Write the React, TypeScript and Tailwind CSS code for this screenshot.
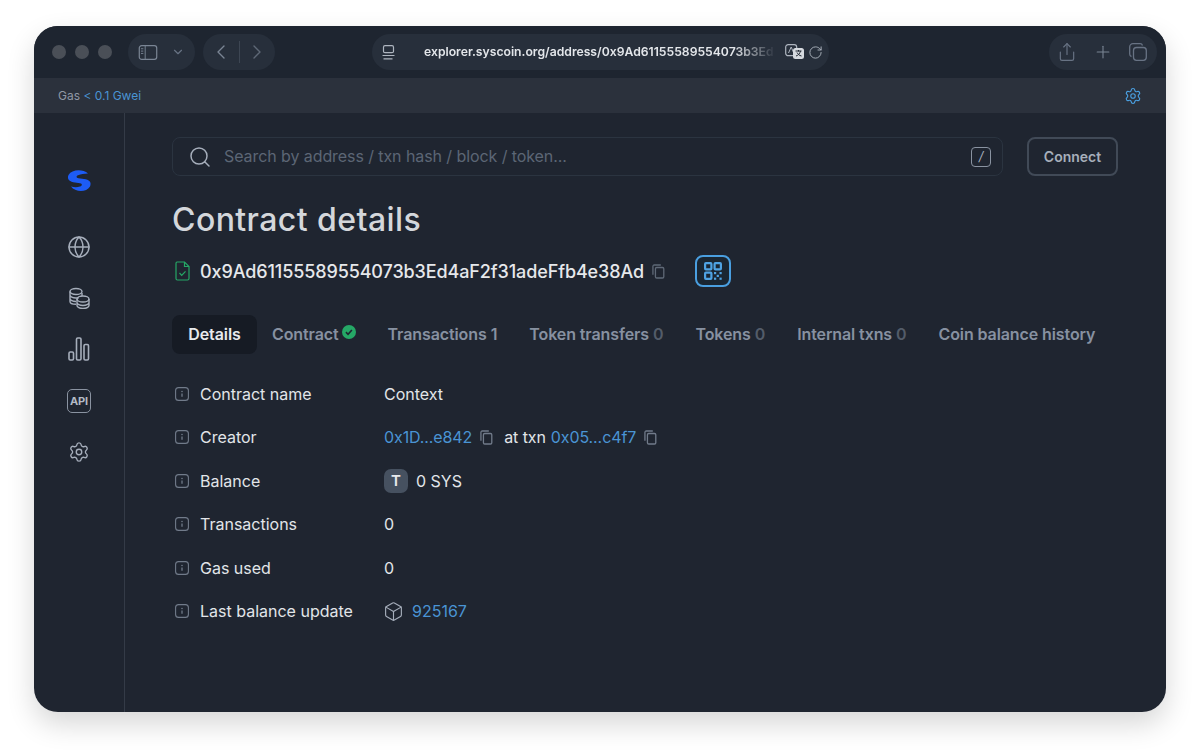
import React from 'react';
import { ChevronLeft, ChevronRight, ChevronDown, Plus, Settings, Search, RotateCw, Globe, Box, Share } from 'lucide-react';

const rows = ['Contract name', 'Creator', 'Balance', 'Transactions', 'Gas used', 'Last balance update'];

function CopyIcon({ className }: { className?: string }) {
  return (
    <svg viewBox="0 0 14 16" fill="none" stroke="currentColor" strokeWidth="1.4" className={className}>
      <rect x="3.7" y="3.7" width="9" height="11.3" rx="1.4" />
      <path d="M1 11.5V2.4C1 1.6 1.6 1 2.4 1h7.1" />
    </svg>
  );
}

function InfoIcon() {
  return (
    <svg viewBox="0 0 14 14" fill="none" className="h-[14px] w-[14px] text-[#717b8a]">
      <rect x="0.6" y="0.6" width="12.8" height="12.8" rx="3" stroke="currentColor" strokeWidth="1.1" />
      <path d="M7 6.4v3.4" stroke="currentColor" strokeWidth="1.3" />
      <circle cx="7" cy="4.5" r="0.8" fill="currentColor" />
    </svg>
  );
}

function Logo() {
  return (
    <svg viewBox="0 0 26 24" className="h-[24px] w-[26px]">
      <path
        d="M22 4.500C17 0 6 0 2.500 6 .5 10.500 4 13 9 13.500l5 .7c2.500.5 2.500 2.500 0 3.300-2.500.7-5 1-9 0 4 5.500 15 6.500 19 0 2-4.500-1-7-6-7.500l-5.500-.7c-2.500-.5-2.500-2.300-.5-3 3-1 6-1.800 10-1.800Z"
        fill="#1d5cf5"
      />
    </svg>
  );
}

function CoinsIcon() {
  return (
    <svg viewBox="0 0 22 22" fill="none" stroke="#a6aebb" strokeWidth="1.4" className="h-[22px] w-[22px]">
      <ellipse cx="8" cy="4.500" rx="6" ry="3" />
      <path d="M2 4.500v10c0 1.500 2.500 2.800 6 2.800M2 8c0 1.600 2.700 3 6 3 1 0 2-.1 2.800-.3M2 11.500c0 1.600 2.700 3 6 3M14 6v3" />
      <ellipse cx="15" cy="12" rx="6" ry="3" />
      <path d="M9 12v6.500c0 1.600 2.700 3 6 3s6-1.400 6-3V12M9 15.500c0 1.600 2.700 3 6 3s6-1.400 6-3" />
    </svg>
  );
}

function BarsIcon() {
  return (
    <svg viewBox="0 0 22 24" fill="none" stroke="#a6aebb" strokeWidth="1.6" className="h-[24px] w-[22px]">
      <rect x="1" y="15" width="4.500" height="8" rx="1.200" />
      <rect x="8.500" y="1" width="4.500" height="22" rx="1.200" />
      <rect x="16" y="7.500" width="4.500" height="15.500" rx="1.200" />
    </svg>
  );
}

function QrIcon() {
  return (
    <svg viewBox="0 0 18 18" fill="none" stroke="#4fa3e3" strokeWidth="2.200" className="h-[18px] w-[18px]">
      <rect x="1.100" y="1.100" width="6.300" height="6.300" rx="0.800" />
      <rect x="10.600" y="1.100" width="6.300" height="6.300" rx="0.800" />
      <rect x="1.100" y="10.600" width="6.300" height="6.300" rx="0.800" />
      <g fill="#4fa3e3" stroke="none">
        <rect x="10" y="10" width="2.200" height="2.200" />
        <rect x="15.500" y="10" width="2.200" height="2.200" />
        <rect x="12.700" y="12.800" width="2.200" height="2.200" />
        <rect x="10" y="15.600" width="2.200" height="2.200" />
        <rect x="15.500" y="15.600" width="2.200" height="2.200" />
      </g>
    </svg>
  );
}

function FileCheckIcon() {
  return (
    <svg viewBox="0 0 15 20" fill="none" stroke="#25a866" strokeWidth="1.200" className="h-[20px] w-[15px]">
      <path d="M2 1h7.500L14 5.500V17.500c0 .8-.7 1.500-1.500 1.500h-10C1.700 19 1 18.300 1 17.500v-15C1 1.700 1.300 1 2 1Z" />
      <path d="M9.500 1v4.500H14M4.500 12l2.200 2.300 3.800-4" />
    </svg>
  );
}

function SidebarIcon() {
  return (
    <svg viewBox="0 0 20 16" fill="none" stroke="#7a8594" strokeWidth="1.300" className="h-[15px] w-[20px]">
      <rect x="0.700" y="0.700" width="18.600" height="14.600" rx="2.500" />
      <path d="M7 .7v14.600M2.500 4h2.500M2.500 6.500h2.500M2.500 9h2.500" strokeWidth="1" />
    </svg>
  );
}

function ReaderIcon() {
  return (
    <svg viewBox="0 0 13 15" fill="none" stroke="#aeb5bf" strokeWidth="1.200" className="h-[15px] w-[13px]">
      <rect x="1.500" y="0.700" width="10" height="7" rx="1.500" />
      <path d="M0.500 10.500h12M1.500 13.800h9" />
    </svg>
  );
}

function TabsIcon() {
  return (
    <svg viewBox="0 0 18 18" fill="none" stroke="#687384" strokeWidth="1.300" className="h-[18px] w-[18px]">
      <rect x="4.500" y="4.500" width="12.800" height="12.800" rx="3" />
      <path d="M13.500 2.500C13.200 1.400 12.300.7 11 .7H4C2.200.7.700 2.200.7 4v7c0 1.300.7 2.200 1.800 2.500" />
    </svg>
  );
}

function TranslateIcon() {
  return (
    <svg viewBox="0 0 20 16" className="h-[16px] w-[20px]">
      <rect x="0.700" y="0.700" width="11" height="11" rx="2.500" fill="none" stroke="#aeb5bf" strokeWidth="1.200" />
      <path d="M3.500 9l2.700-6 2.500 6" fill="none" stroke="#aeb5bf" strokeWidth="1" />
      <rect x="8" y="4" width="11" height="11" rx="2.500" fill="#d5d9de" />
      <path d="M10.500 7h6M13.500 6v1.500M15.500 7c-.5 2.500-2.500 4.500-4.500 5M12 8.500c.7 1.500 2.200 3 4.500 3.500" fill="none" stroke="#1f2630" strokeWidth="1" />
    </svg>
  );
}

function Tab({ label, count, countClass }: { label: string; count?: string; countClass?: string }) {
  return (
    <div className="flex h-[39px] shrink-0 items-center whitespace-nowrap px-4 pb-[1px] text-[16px] font-semibold tracking-[-0.1px] text-[#8791a1]">
      <span>{label}</span>
      {count && <span className={`ml-1 ${countClass}`}>{count}</span>}
    </div>
  );
}

export default function App() {
  return (
    <div className="h-[754px] w-[1200px] overflow-hidden bg-white pl-[34px] pt-[26px] font-['Inter',sans-serif]">
      <div className="flex h-[686px] w-[1132px] flex-col overflow-hidden rounded-[24px] bg-[#1f2530] shadow-[0_12px_28px_rgba(0,0,0,0.16)]">
        {/* safari toolbar */}
        <div className="flex h-[52px] shrink-0 items-center bg-[#1e2530] pl-[18px] pr-[9px]">
          <div className="flex gap-[9px]">
            <span className="h-[14px] w-[14px] rounded-full bg-[#4a4f57]" />
            <span className="h-[14px] w-[14px] rounded-full bg-[#4a4f57]" />
            <span className="h-[14px] w-[14px] rounded-full bg-[#4a4f57]" />
          </div>
          <div className="ml-[16px] flex h-[36px] w-[67px] items-center gap-[13px] rounded-full bg-[#272f3b] pl-[10px]">
            <SidebarIcon />
            <ChevronDown className="h-[14px] w-[14px] text-[#687384]" />
          </div>
          <div className="ml-[8px] flex h-[36px] w-[72px] items-center justify-between rounded-full bg-[#272f3b] px-[6px]">
            <ChevronLeft className="h-[24px] w-[24px] text-[#7a8594]" strokeWidth={1.400} />
            <span className="h-[22px] w-px bg-[#3d4653]" />
            <ChevronRight className="h-[24px] w-[24px] text-[#5e6876]" strokeWidth={1.400} />
          </div>
          <div className="ml-[97px] flex h-[36px] w-[457px] items-center rounded-full bg-[#272f3b] pl-[10px] pr-[6px]">
            <ReaderIcon />
            <span className="ml-[29px] w-[352px] whitespace-nowrap text-[12.200px] font-semibold text-[#e3e6ea] [mask-image:linear-gradient(to_right,black_88%,transparent)]">
              explorer.syscoin.org/address/0x9Ad61155589554073b3Ed
            </span>
            <span className="ml-[9px]"><TranslateIcon /></span>
            <RotateCw className="ml-[3px] h-[15px] w-[15px] text-[#aeb5bf]" strokeWidth={1.500} />
          </div>
          <div className="ml-auto flex h-[36px] w-[108px] items-center justify-between rounded-full bg-[#272f3b] pl-[8px] pr-[10px]">
            <Share className="h-[20px] w-[20px] text-[#687384]" strokeWidth={1.400} />
            <Plus className="h-[20px] w-[20px] text-[#7a8594]" strokeWidth={1.300} />
            <TabsIcon />
          </div>
        </div>

        {/* gas bar */}
        <div className="flex h-[35px] shrink-0 items-center justify-between bg-[#2b313c] pl-[24px] pr-[24px] text-[12px]">
          <div>
            <span className="text-[#9098a5]">Gas </span>
            <span className="text-[#4a94d4]">{'< 0.1 Gwei'}</span>
          </div>
          <Settings className="h-[18px] w-[18px] text-[#4a9fe0]" strokeWidth={1.500} />
        </div>

        <div className="flex min-h-0 flex-1">
          {/* side nav */}
          <div className="flex w-[91px] shrink-0 flex-col items-center border-r border-[#343b47] pt-[56px]">
            <Logo />
            <div className="mt-[42px] flex flex-col items-center gap-[28px]">
              <Globe className="h-[24px] w-[24px] text-[#a6aebb]" strokeWidth={1.500} />
              <CoinsIcon />
              <BarsIcon />
              <div className="flex h-[24px] w-[24px] items-center justify-center rounded-[5px] border-[1.500px] border-[#8a93a1] text-[11px] font-bold leading-none tracking-[-0.2px] text-[#b3bac5]">
                API
              </div>
              <Settings className="h-[22px] w-[22px] text-[#a6aebb]" strokeWidth={1.500} />
            </div>
          </div>

          {/* main */}
          <div className="min-w-0 flex-1 pl-[47px] pr-[48px] pt-[24px]">
            <div className="flex gap-[24px]">
              <div className="flex h-[39px] flex-1 items-center rounded-[8px] border border-[#2b3440] pl-[15px] pr-[11px]">
                <Search className="h-[24px] w-[24px] text-[#a6aebb]" strokeWidth={1.500} />
                <span className="ml-[12px] flex-1 pb-[1px] text-[16px] tracking-[-0.08px] text-[#5c6675]">Search by address / txn hash / block / token...</span>
                <span className="flex h-[20px] w-[20px] items-center justify-center rounded-[4px] border border-[#8a93a1] text-[13px] italic text-[#a6aebb]">/</span>
              </div>
              <button className="h-[39px] w-[91px] rounded-[8px] border-2 border-[#414a57] text-[14px] font-semibold text-[#a7afbb]">
                Connect
              </button>
            </div>

            <h1 className="mt-[24px] text-[32px] font-medium leading-[40px] tracking-[0.42px] text-[#d4d7db]">Contract details</h1>

            <div className="mt-[15px] flex h-[32px] items-center">
              <span className="ml-[3px]"><FileCheckIcon /></span>
              <span className="ml-[10px] text-[18px] font-medium tracking-[-0.11px] text-[#e6e8eb]">0x9Ad61155589554073b3Ed4aF2f31adeFfb4e38Ad</span>
              <CopyIcon className="ml-[8px] h-[15px] w-[13px] text-[#5f6977]" />
              <div className="ml-[30px] flex h-[32px] w-[36px] items-center justify-center rounded-[8px] border-2 border-[#4a9fe0] bg-[#1a2632]">
                <QrIcon />
              </div>
            </div>

            <div className="mt-[28px] flex">
              <div className="flex h-[39px] w-[85px] shrink-0 items-center justify-center rounded-[8px] bg-[#161b24] pb-[1px] text-[16px] font-semibold tracking-[-0.1px] text-[#e8eaed]">
                Details
              </div>
              <div className="-ml-[1px] flex h-[39px] shrink-0 items-center px-4 pb-[1px] text-[16px] font-semibold tracking-[-0.1px] text-[#8791a1]">
                <span>Contract</span>
                <svg viewBox="0 0 16 16" className="ml-[3px] -mt-[4px] h-[14px] w-[14px]">
                  <circle cx="8" cy="8" r="8" fill="#25a866" />
                  <path d="M4.500 8.200l2.400 2.400 4.400-4.800" fill="none" stroke="#1f2530" strokeWidth="1.800" />
                </svg>
              </div>
              <Tab label="Transactions" count="1" countClass="text-[#8791a1]" />
              <Tab label="Token transfers" count="0" countClass="text-[#535c69]" />
              <Tab label="Tokens" count="0" countClass="text-[#535c69]" />
              <Tab label="Internal txns" count="0" countClass="text-[#535c69]" />
              <Tab label="Coin balance history" />
            </div>

            <div className="mt-[18px] flex flex-col">
              {rows.map((label, i) => (
                <div key={label} className="flex h-[43.500px] items-center text-[16px] text-[#e2e5e9]">
                  <div className="flex w-[212px] shrink-0 items-center pl-[3px]">
                    <InfoIcon />
                    <span className="ml-[11px]">{label}</span>
                  </div>
                  {i === 0 && <span>Context</span>}
                  {i === 1 && (
                    <div className="flex items-center">
                      <span className="tracking-[-0.1px] text-[#4a94d4]">0x1D...e842</span>
                      <CopyIcon className="ml-[8px] h-[15px] w-[13px] text-[#717b8a]" />
                      <span className="ml-[11px] tracking-[-0.1px]">at txn</span>
                      <span className="ml-[5px] tracking-[-0.1px] text-[#4a94d4]">0x05...c4f7</span>
                      <CopyIcon className="ml-[8px] h-[15px] w-[13px] text-[#717b8a]" />
                    </div>
                  )}
                  {i === 2 && (
                    <div className="flex items-center">
                      <span className="flex h-[24px] w-[24px] items-center justify-center rounded-[7px] bg-[#465160] text-[15px] font-semibold text-[#e8eaed]">T</span>
                      <span className="ml-[8px]">0 SYS</span>
                    </div>
                  )}
                  {(i === 3 || i === 4) && <span>0</span>}
                  {i === 5 && (
                    <div className="flex items-center">
                      <Box className="ml-[-1px] h-[21px] w-[21px] text-[#a6aebb]" strokeWidth={1.300} />
                      <span className="ml-[8px] text-[#4a94d4]">925167</span>
                    </div>
                  )}
                </div>
              ))}
            </div>
          </div>
        </div>
      </div>
    </div>
  );
}
